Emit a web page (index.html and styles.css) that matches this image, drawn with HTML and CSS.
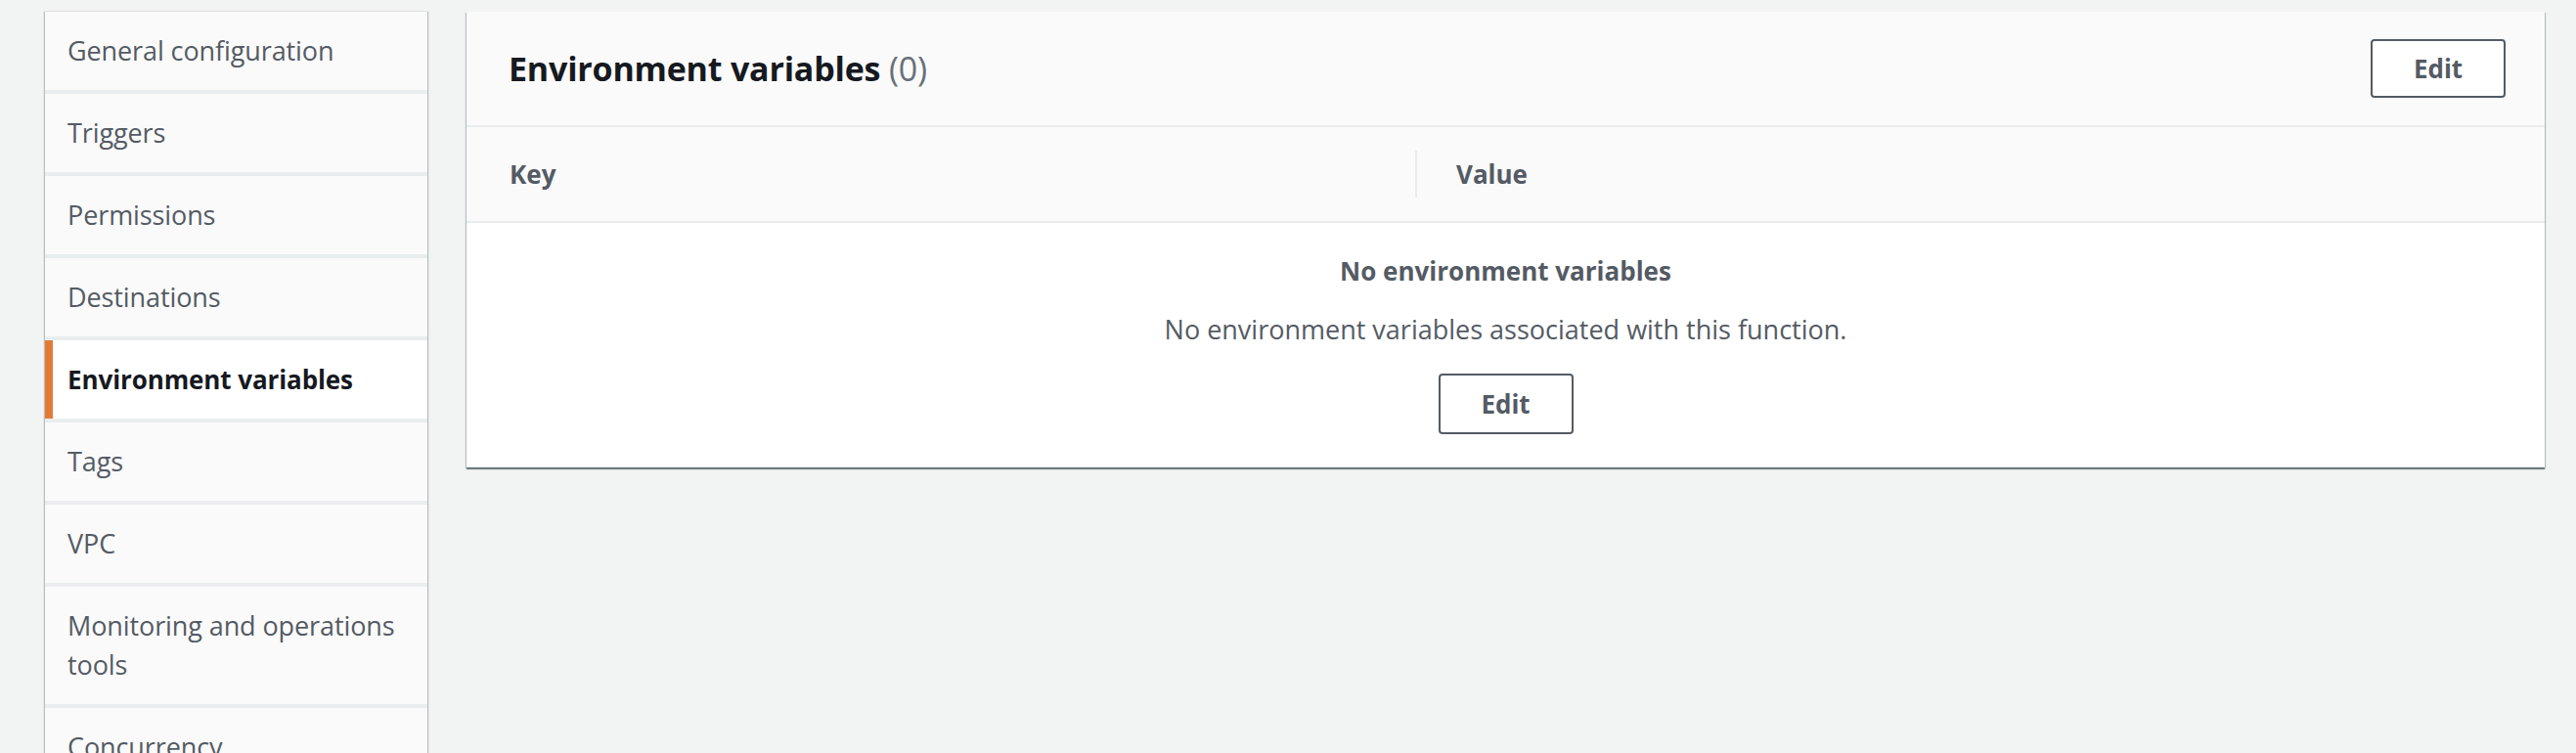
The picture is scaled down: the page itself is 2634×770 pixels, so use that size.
FILE: index.html
```html
<!DOCTYPE html>
<html lang="en">
<head>
<meta charset="utf-8">
<title>Environment variables</title>
<link rel="stylesheet" href="styles.css">
</head>
<body>
<div class="page">
  <nav class="side-nav">
    <a class="nav-item">General configuration</a>
    <a class="nav-item">Triggers</a>
    <a class="nav-item">Permissions</a>
    <a class="nav-item">Destinations</a>
    <a class="nav-item active">Environment variables</a>
    <a class="nav-item">Tags</a>
    <a class="nav-item">VPC</a>
    <a class="nav-item">Monitoring and operations tools</a>
    <a class="nav-item">Concurrency</a>
    <a class="nav-item">Asynchronous invocation</a>
  </nav>
  <main class="content">
    <section class="panel">
      <header class="panel-header">
        <h2 class="panel-title">Environment variables <span class="count">(0)</span></h2>
        <button class="btn">Edit</button>
      </header>
      <div class="table-head">
        <div class="col col-key">Key</div>
        <div class="col col-value">Value</div>
      </div>
      <div class="empty">
        <div class="empty-title">No environment variables</div>
        <p class="empty-text">No environment variables associated with this function.</p>
        <button class="btn btn-empty">Edit</button>
      </div>
    </section>
  </main>
</div>
</body>
</html>
```

FILE: styles.css
```css
html, body {
  margin: 0;
  padding: 0;
  height: 100%;
  overflow: hidden;
}

body {
  background: #f2f3f3;
  font-family: "Open Sans", "Noto Sans", sans-serif;
  font-size: 27px;
  color: #545b64;
}

.page {
  display: flex;
  align-items: flex-start;
  gap: 40px;
  padding: 12px 32px 0 46px;
}

.side-nav {
  flex: 0 0 391px;
  display: flex;
  flex-direction: column;
  gap: 4px;
  background: #eaeded;
  box-shadow: 1px 0 1px 0 rgba(0, 28, 36, 0.25), -1px 0 1px 0 rgba(0, 28, 36, 0.25);
}

.nav-item {
  display: block;
  background: #fafafa;
  padding: 20px 16px 20px 23px;
  line-height: 40px;
  color: #545b64;
  letter-spacing: -0.1px;
}

.nav-item.active {
  background: #ffffff;
  color: #16191f;
  font-weight: 700;
  font-size: 26px;
  border-left: 8px solid #e27a36;
  padding-left: 15px;
}

.content {
  flex: 1;
}

.panel {
  background: #ffffff;
  box-shadow: 0 2px 1px 0 rgba(0, 28, 36, 0.45), 1px 1px 1px 0 rgba(0, 28, 36, 0.2), -1px 1px 1px 0 rgba(0, 28, 36, 0.2);
}

.panel-header {
  display: flex;
  align-items: center;
  justify-content: space-between;
  height: 116px;
  padding: 0 40px 0 43px;
  background: #fafafa;
  border-bottom: 2px solid #eaeded;
}

.panel-title {
  margin: 0;
  font-size: 34px;
  font-weight: 700;
  color: #16191f;
  letter-spacing: -0.2px;
}

.count {
  font-weight: 400;
  color: #687078;
}

.btn {
  width: 138px;
  height: 60px;
  background: #ffffff;
  border: 2px solid #545b64;
  border-radius: 4px;
  font-family: inherit;
  font-size: 26px;
  font-weight: 700;
  color: #545b64;
  padding: 0;
}

.btn-empty {
  height: 62px;
}

.table-head {
  display: grid;
  grid-template-columns: 970px 1fr;
  align-items: center;
  height: 96px;
  background: #fafafa;
  border-bottom: 2px solid #eaeded;
}

.col {
  font-weight: 700;
  font-size: 26px;
  color: #545b64;
  line-height: 48px;
}

.col-key {
  padding-left: 44px;
}

.col-value {
  border-left: 2px solid #eaeded;
  padding-left: 40px;
}

.empty {
  display: flex;
  flex-direction: column;
  align-items: center;
  padding: 30px 0 34px;
}

.empty-title {
  font-weight: 700;
  font-size: 26px;
  line-height: 38px;
  color: #545b64;
}

.empty-text {
  margin: 22px 0 26px;
  line-height: 38px;
  color: #545b64;
}
```
